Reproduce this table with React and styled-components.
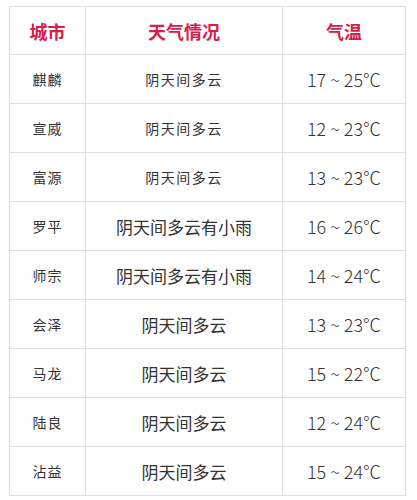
import React from "react";
import styled, { createGlobalStyle } from "styled-components";

const GlobalStyle = createGlobalStyle`
  body {
    margin: 0;
    background: #ffffff;
    font-family: "Noto Sans CJK SC", "Noto Sans", sans-serif;
  }
`;

const rows = [
  { city: "麒麟", weather: "阴天间多云", temp: "17 ~ 25℃", small: true },
  { city: "宣威", weather: "阴天间多云", temp: "12 ~ 23℃", small: true },
  { city: "富源", weather: "阴天间多云", temp: "13 ~ 23℃", small: true },
  { city: "罗平", weather: "阴天间多云有小雨", temp: "16 ~ 26℃" },
  { city: "师宗", weather: "阴天间多云有小雨", temp: "14 ~ 24℃" },
  { city: "会泽", weather: "阴天间多云", temp: "13 ~ 23℃" },
  { city: "马龙", weather: "阴天间多云", temp: "15 ~ 22℃" },
  { city: "陆良", weather: "阴天间多云", temp: "12 ~ 24℃" },
  { city: "沾益", weather: "阴天间多云", temp: "15 ~ 24℃" },
];

const App = () => {
  return (
    <Page>
      <GlobalStyle />
      <WeatherTable>
        <colgroup>
          <col style={{ width: 76 }} />
          <col style={{ width: 197 }} />
          <col style={{ width: 123 }} />
        </colgroup>
        <thead>
          <HeadRow>
            <HeadCell>城市</HeadCell>
            <HeadCell>天气情况</HeadCell>
            <HeadCell>气温</HeadCell>
          </HeadRow>
        </thead>
        <tbody>
          {rows.map((row) => (
            <BodyRow key={row.city}>
              <CityCell>{row.city}</CityCell>
              <WeatherCell small={row.small}>{row.weather}</WeatherCell>
              <TempCell>{row.temp}</TempCell>
            </BodyRow>
          ))}
        </tbody>
      </WeatherTable>
    </Page>
  );
};

export default App;

const Page = styled.div`
  width: 417px;
  height: 500px;
  padding: 6px 0 0 9px;
  box-sizing: border-box;
`;

const WeatherTable = styled.table`
  width: 397px;
  border-collapse: collapse;
  table-layout: fixed;
  color: #333333;

  td,
  th {
    border: 1px solid #dedede;
    text-align: center;
    padding: 0;
  }
`;

const HeadRow = styled.tr`
  height: 48px;
`;

const HeadCell = styled.th`
  color: #d6204a;
  font-size: 18px;
  font-weight: 700;
`;

const BodyRow = styled.tr`
  height: 49px;
`;

const CityCell = styled.td`
  font-size: 14px;
  letter-spacing: 1px;
`;

const WeatherCell = styled.td`
  font-size: ${(props) => (props.small ? "14px" : "17px")};
  letter-spacing: ${(props) => (props.small ? "1.5px" : "0")};
`;

const TempCell = styled.td`
  font-size: 18px;
  font-weight: 300;
`;
